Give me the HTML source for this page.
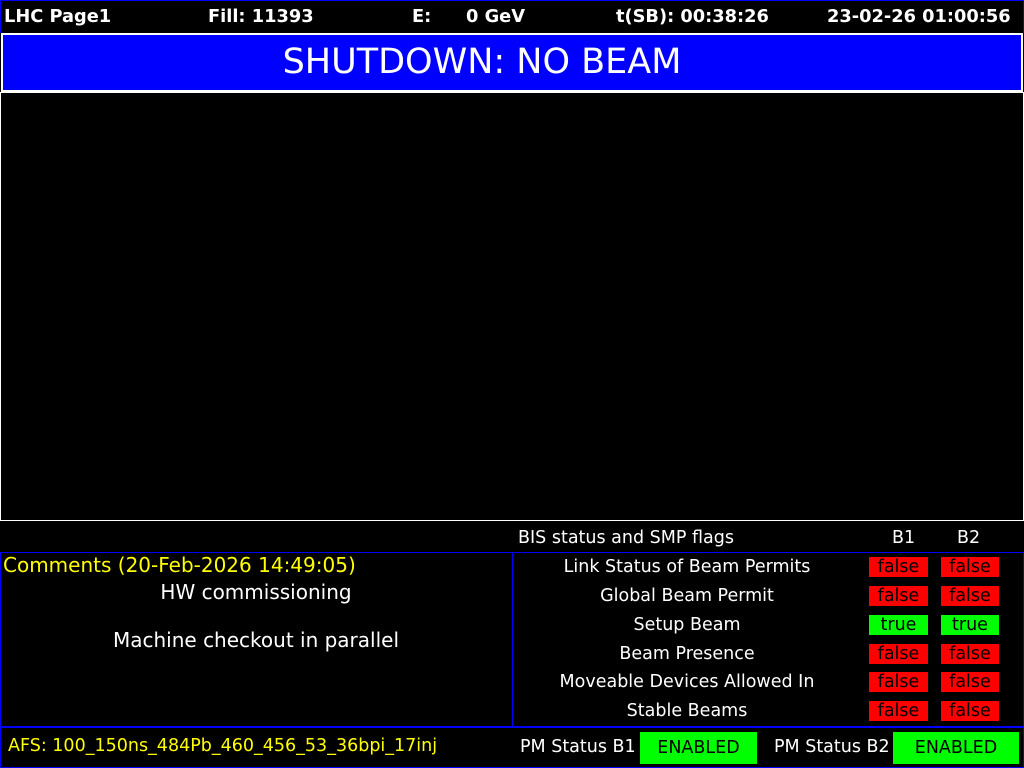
<!DOCTYPE html>
<html><head><meta charset="utf-8"><style>
*{margin:0;padding:0;box-sizing:border-box}
body{width:1024px;height:768px;background:#000;position:relative;overflow:hidden;font-family:"DejaVu Sans","Liberation Sans",sans-serif;color:#fff}
.a{position:absolute;white-space:nowrap}
.h{font-weight:bold;font-size:17.8px;top:6px;line-height:22px}
.row{font-size:17.5px;line-height:20px;text-align:center;width:350px;left:512px}
.f{background:#ff0000;color:#000;width:59px;height:20px;font-size:17.5px;line-height:20px;text-align:center}
.t{background:#00ff00}
</style></head><body>
<div class="a" style="left:0;top:0;width:1024px;height:33px;border:1px solid #0000ff;border-bottom:none"></div>
<div class="a h" style="left:4px">LHC Page1</div>
<div class="a h" style="left:208px">Fill: 11393</div>
<div class="a h" style="left:412px">E:</div>
<div class="a h" style="left:466px">0 GeV</div>
<div class="a h" style="left:616px">t(SB): 00:38:26</div>
<div class="a h" style="left:827px">23-02-26 01:00:56</div>
<div class="a" style="left:1px;top:33px;width:1022px;height:59px;background:#0000ff;border:2px solid #fff"></div>
<div class="a" style="left:0;top:41px;width:964px;text-align:center;font-size:35px;line-height:42px">SHUTDOWN: NO BEAM</div>
<div class="a" style="left:0;top:92px;width:1024px;height:429px;border:1px solid #fff"></div>
<div class="a" style="left:518px;top:528px;font-size:17.5px;line-height:20px">BIS status and SMP flags</div>
<div class="a" style="left:892px;top:528px;font-size:17.5px;line-height:20px">B1</div>
<div class="a" style="left:957px;top:528px;font-size:17.5px;line-height:20px">B2</div>
<div class="a" style="left:0;top:552px;width:513px;height:176px;border:1px solid #0000ff"></div>
<div class="a" style="left:512px;top:552px;width:512px;height:176px;border:1px solid #0000ff"></div>
<div class="a" style="left:0;top:726px;width:1024px;height:42px;border:1px solid #0000ff;border-top:2px solid #0000ff"></div>
<div class="a" style="left:3px;top:553px;font-size:20px;line-height:24px;color:#ffff00">Comments (20-Feb-2026 14:49:05)</div>
<div class="a" style="left:0;top:580px;width:512px;text-align:center;font-size:20px;line-height:24px">HW commissioning</div>
<div class="a" style="left:0;top:628px;width:512px;text-align:center;font-size:20px;line-height:24px">Machine checkout in parallel</div>
<div class="a" style="left:8px;top:736px;font-size:17.5px;line-height:20px;color:#ffff00">AFS: 100_150ns_484Pb_460_456_53_36bpi_17inj</div>
<div class="a row" style="top:557px">Link Status of Beam Permits</div>
<div class="a row" style="top:586px">Global Beam Permit</div>
<div class="a row" style="top:615px">Setup Beam</div>
<div class="a row" style="top:644px">Beam Presence</div>
<div class="a row" style="top:672px">Moveable Devices Allowed In</div>
<div class="a row" style="top:701px">Stable Beams</div>
<div class="a f" style="left:869px;top:557px">false</div><div class="a f" style="left:941px;top:557px;width:58px">false</div>
<div class="a f" style="left:869px;top:586px">false</div><div class="a f" style="left:941px;top:586px;width:58px">false</div>
<div class="a f t" style="left:869px;top:615px">true</div><div class="a f t" style="left:941px;top:615px;width:58px">true</div>
<div class="a f" style="left:869px;top:644px">false</div><div class="a f" style="left:941px;top:644px;width:58px">false</div>
<div class="a f" style="left:869px;top:672px">false</div><div class="a f" style="left:941px;top:672px;width:58px">false</div>
<div class="a f" style="left:869px;top:701px">false</div><div class="a f" style="left:941px;top:701px;width:58px">false</div>
<div class="a" style="left:520px;top:737px;font-size:17.5px;line-height:20px">PM Status B1</div>
<div class="a f t" style="left:640px;top:732px;width:117px;height:32px;line-height:32px">ENABLED</div>
<div class="a" style="left:774px;top:737px;font-size:17.5px;line-height:20px">PM Status B2</div>
<div class="a f t" style="left:893px;top:732px;width:126px;height:32px;line-height:32px">ENABLED</div>
</body></html>
